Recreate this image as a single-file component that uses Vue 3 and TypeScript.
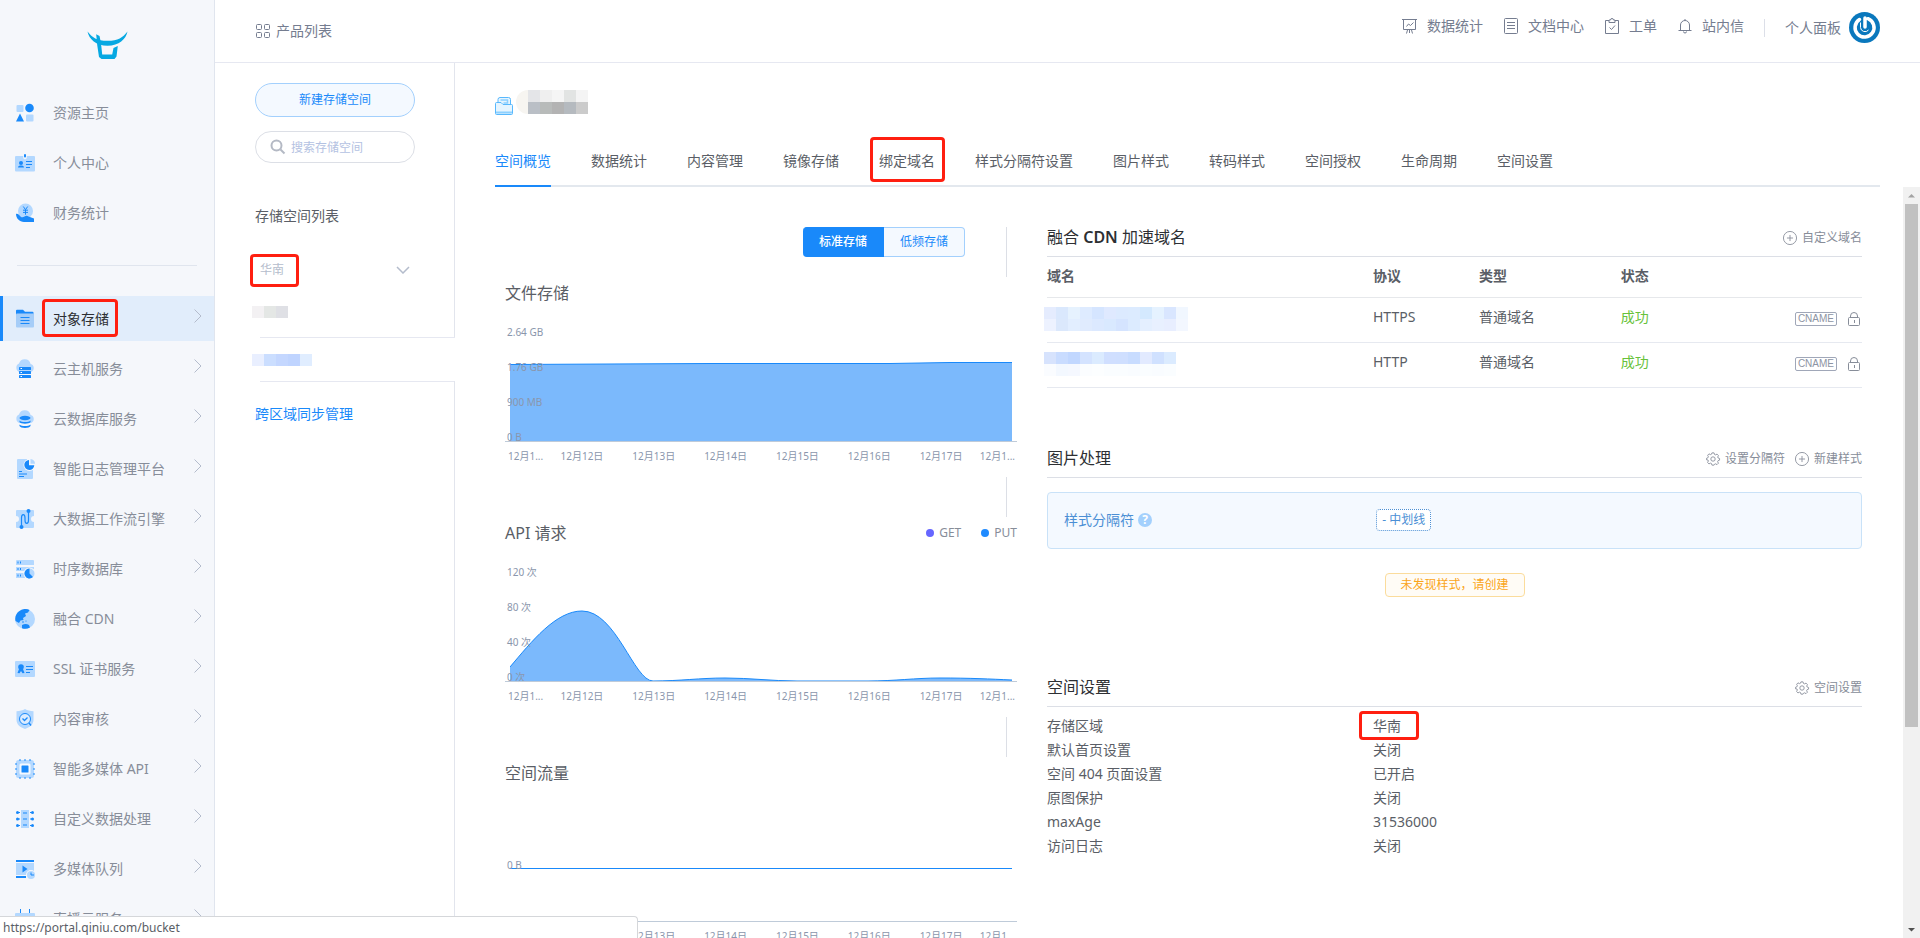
<script setup lang="ts">
import { ref } from 'vue'

interface NavItem {
  label: string
  icon: string
  active?: boolean
}

interface Chart {
  title: string
  legend: { name: string; color: string }[]
  ticks: { label: string; top: number }[]
  area: string
  line: string
}

const L = '#b3d8ff'
const B = '#1989fa'

const topNav: NavItem[] = [
  {
    label: '资源主页',
    icon: `<rect x="1.500" y="2" width="7" height="7" rx="1" fill="${L}"/><circle cx="14.500" cy="5" r="4.300" fill="${B}"/><path d="M5 10.500 9 18.500H1Z" fill="${B}"/><rect x="11" y="11.500" width="7.500" height="7" rx="1" fill="${L}"/>`,
  },
  {
    label: '个人中心',
    icon: `<path d="M1 3h7.200v1.600a1.800 1.800 0 0 0 3.600 0V3H19a1 1 0 0 1 1 1v13.500a1 1 0 0 1-1 1H1a1 1 0 0 1-1-1V4a1 1 0 0 1 1-1Z" fill="${L}"/><rect x="9" y="1" width="2" height="3.500" rx="1" fill="${B}"/><circle cx="6" cy="10" r="2" fill="${B}"/><path d="M3 14.500c0-2.600 6-2.600 6 0ZM11 8h6v1h-6ZM11 11h6v1h-6ZM11 14h4v1h-4Z" fill="${B}"/>`,
  },
  {
    label: '财务统计',
    icon: `<circle cx="10.500" cy="8" r="7.500" fill="${L}"/><path d="m8.300 3.500 2.200 3.200 2.200-3.200M10.500 6.700v5M8 7.200h5M8 9.400h5" stroke="${B}" fill="none"/><path d="M1 11c1.600-.6 3 .5 4 2 1.500 1.800 3 1.500 4.500.6 1.600-1 2.700-.9 4-.2l5.500 2.100V19H9c-4.500 0-8-3.800-8-8Z" fill="${B}"/>`,
  },
]

const productNav: NavItem[] = [
  {
    label: '对象存储',
    active: true,
    icon: `<path d="M1 1.500A1 1 0 0 1 2 .8h6l2 2h7.500a1 1 0 0 1 1 1V6H1Z" fill="${B}"/><rect x="1" y="4.500" width="18" height="14" rx="1" fill="#a5cdf8"/><path d="M5.500 8.500h9M5.500 11.500h9M5.500 14.500h9" stroke="${B}"/>`,
  },
  {
    label: '云主机服务',
    icon: `<path d="M4.500 13A4.500 4.500 0 0 1 4 4.600 6 6 0 0 1 15.600 5 4.200 4.200 0 0 1 16 13Z" fill="${L}"/><rect x="4" y="8" width="12" height="3" rx=".6" fill="${B}"/><rect x="4" y="12" width="12" height="3" rx=".6" fill="${B}"/><rect x="4" y="16" width="12" height="3" rx=".6" fill="${B}"/><path d="M5.500 9.500h1.500M5.500 13.500h1.500M5.500 17.500h1.500" stroke="#fff"/>`,
  },
  {
    label: '云数据库服务',
    icon: `<path d="M4.500 14A4.500 4.500 0 0 1 4 5.600 6 6 0 0 1 15.600 6 4.200 4.200 0 0 1 16 14Z" fill="${L}"/><ellipse cx="10" cy="9" rx="5.500" ry="2.200" fill="${B}"/><path d="M4.500 11.500c2 2 9 2 11 0v1.500c-1 2.300-10 2.300-11 0ZM4.500 15.500c2 2 9 2 11 0V17c-1 2.600-10 2.600-11 0Z" fill="${B}"/>`,
  },
  {
    label: '智能日志管理平台',
    icon: `<path d="M3 0h9v10h6v9a1 1 0 0 1-1 1H3a1 1 0 0 1-1-1V1a1 1 0 0 1 1-1Z" fill="${L}"/><circle cx="14.500" cy="6" r="6" fill="#f5f7fb"/><path d="M14 1v5.300h5.300A5 5 0 1 1 14 1Z" fill="${B}"/><path d="M15.500 0a5 5 0 0 1 4.500 4.700h-4.500Z" fill="${L}"/><path d="M4 12.500h3M4 15h8M4 17.500h5" stroke="${B}"/>`,
  },
  {
    label: '大数据工作流引擎',
    icon: `<path d="M2 1h16a1 1 0 0 1 1 1v5a3 3 0 0 0 0 6v5a1 1 0 0 1-1 1H2a1 1 0 0 1-1-1v-5a3 3 0 0 0 0-6V2a1 1 0 0 1 1-1Z" fill="${L}"/><path d="M6.500 17V9c0-4.500 3.500-4.500 3.500 0v2c0 4.500 3.500 4.500 3.500 0V2" stroke="${B}" stroke-width="1.200" fill="none"/><circle cx="6.500" cy="18" r="2" fill="${B}"/><circle cx="13.500" cy="2" r="2" fill="${B}"/>`,
  },
  {
    label: '时序数据库',
    icon: `<path d="M2 1h16a1 1 0 0 1 1 1v4H1V2a1 1 0 0 1 1-1ZM1 8h18v4H1ZM1 14h9v5H1Z" fill="${L}"/><path d="M3 2.500v2M5.500 2.500v2M3 9v2M5.500 9v2M3 15.500v2M5.500 15.500v2" stroke="${B}"/><circle cx="14.500" cy="14.500" r="6" fill="#f5f7fb"/><circle cx="14.500" cy="14.500" r="5" fill="${L}"/><path d="M14.500 9.500v5l3.500 3.600a5 5 0 1 1-3.500-8.600Z" fill="${B}"/>`,
  },
  {
    label: '融合 CDN',
    icon: `<circle cx="10" cy="10" r="10" fill="${L}"/><path d="M.5 12A10 10 0 0 1 14.500 1l-1.500 2.500-3 1 1 2.500-3 2 .5 2-3 .500L4 14Z" fill="${B}"/><path d="M7 16c3-1.600 5-1 7 0l1 2.500a10 10 0 0 1-8 .8Z" fill="${B}"/><circle cx="8" cy="13" r=".8" fill="${B}"/><circle cx="11" cy="12" r=".6" fill="${B}"/>`,
  },
  {
    label: 'SSL 证书服务',
    icon: `<rect y="2" width="20" height="16" rx="1" fill="${L}"/><circle cx="6" cy="8" r="2.800" fill="${B}"/><path d="m4 10-1.500 4 2 .2L6 12l1.500 2.200 2-.2L8 10ZM11 7h7v1h-7ZM11 10h7v1h-7ZM11 13h4v1h-4Z" fill="${B}"/>`,
  },
  {
    label: '内容审核',
    icon: `<path d="M10 0c2.500 1.500 5 2 8.500 2.200V11c0 4.500-4 7.500-8.500 9-4.500-1.500-8.500-4.500-8.500-9V2.200C5 2 7.500 1.500 10 0Z" fill="${L}"/><circle cx="10" cy="10" r="5.500" fill="#dbecff" stroke="${B}"/><path d="m7.500 9.500 2 2 3-3M14 14l2 2.500" stroke="${B}" stroke-width="1.300" fill="none"/>`,
  },
  {
    label: '智能多媒体 API',
    icon: `<rect x="1" y="1" width="18" height="18" rx="2.500" fill="${L}"/><path d="M5 0v2M10 0v2M15 0v2M5 18v2M10 18v2M15 18v2M0 5h2M0 10h2M0 15h2M18 5h2M18 10h2M18 15h2" stroke="${B}"/><rect x="4.500" y="4.500" width="11" height="11" rx="1.500" fill="#f5f9ff"/><rect x="6.500" y="6.500" width="7" height="7" rx=".6" fill="${B}"/>`,
  },
  {
    label: '自定义数据处理',
    icon: `<rect x="6" y="1" width="8" height="18" fill="${L}"/><path d="M2 3.500h3M2 10h3M2 16.500h3M15 3.500h3M15 10h3M15 16.500h3M8 4h4M8 10h4M8 16h4" stroke="${B}"/><g fill="${B}"><circle cx="2.500" cy="3.500" r="1.500"/><circle cx="2.500" cy="10" r="1.500"/><circle cx="2.500" cy="16.500" r="1.500"/><circle cx="17.500" cy="3.500" r="1.500"/><circle cx="17.500" cy="10" r="1.500"/><circle cx="17.500" cy="16.500" r="1.500"/></g>`,
  },
  {
    label: '多媒体队列',
    icon: `<rect x="1" y="4" width="18" height="12" fill="${L}"/><path d="M1 2h18M1 18h10" stroke="${B}" stroke-width="2"/><path d="m7.500 6.500 5 3.500-5 3.500Z" fill="${B}"/><circle cx="16" cy="16" r="5" fill="#f5f7fb"/><circle cx="16" cy="16" r="4" fill="${L}"/><path d="M16 13.500V16h3" stroke="${B}" fill="none"/>`,
  },
  {
    label: '直播云服务',
    icon: `<rect y="4" width="20" height="14" rx="1" fill="${L}"/><path d="M5.500 0v4M14.500 0v4" stroke="${B}"/>`,
  },
]

const headerLinks: NavItem[] = [
  {
    label: '数据统计',
    icon: '<path d="M0 1.500h15M1.500 1.500v10h12v-10M4.500 8.500l2-2.500 2 1.500 3-3M7.500 12v3M4.500 15.500l1-3.500M10.500 15.500l-1-3.500"/>',
  },
  {
    label: '文档中心',
    icon: '<rect x="1.500" y=".5" width="13" height="15" rx="1"/><path d="M4 4.500h8M4 7.500h8M4 10.500h8"/>',
  },
  {
    label: '工单',
    icon: '<path d="M5 2.500H1.500v13h13v-13H11M5 4.500h6v-2.500H9.500a1.500 1.500 0 0 0-3 0H5ZM5.500 9.500l2 2L11 7.500"/>',
  },
  {
    label: '站内信',
    icon: '<path d="M1.500 12.500h13M3.500 12.500V7a4.500 4.500 0 0 1 9 0v5.500M8 2.500V1M6.500 13.500a1.500 1.500 0 0 0 3 0"/>',
  },
]

const tabs = [
  '空间概览', '数据统计', '内容管理', '镜像存储', '绑定域名', '样式分隔符设置',
  '图片样式', '转码样式', '空间授权', '生命周期', '空间设置',
]

const dates = ['12月1...', '12月12日', '12月13日', '12月14日', '12月15日', '12月16日', '12月17日', '12月1...']

const apiCurve = 'M0 150C22 124 46 94 72 94C106 94 124 164 143 164C170 164 190 161 215 161C240 161 262 164 287 164H358C385 164 405 161 430 161C460 161 480 162 502 163'

const charts: Chart[] = [
  {
    title: '文件存储',
    legend: [],
    ticks: [
      { label: '2.64 GB', top: 45 },
      { label: '1.76 GB', top: 80 },
      { label: '900 MB', top: 115 },
      { label: '0 B', top: 150 },
    ],
    line: 'M0 87.500L200 86.500L380 86.500L440 85.500H502',
    area: 'M0 87.500L200 86.500L380 86.500L440 85.500H502V164H0Z',
  },
  {
    title: 'API 请求',
    legend: [
      { name: 'GET', color: '#6666ff' },
      { name: 'PUT', color: '#1f8bff' },
    ],
    ticks: [
      { label: '120 次', top: 45 },
      { label: '80 次', top: 80 },
      { label: '40 次', top: 115 },
      { label: '0 次', top: 150 },
    ],
    line: apiCurve,
    area: `${apiCurve}V164H0Z`,
  },
  {
    title: '空间流量',
    legend: [],
    ticks: [{ label: '0 B', top: 98 }],
    line: 'M0 111.500H502',
    area: '',
  },
]

const domains = [
  {
    protocol: 'HTTPS',
    mosaic: [
      ['#e5ecfe', '#dae8fd', '#e6f2fe', '#deebff', '#d5e5ff', '#dfe9ff', '#dceaff', '#dcebff', '#d4e9fe', '#e5f2ff', '#d9e6ff', '#f1f7ff'],
      ['#edf2ff', '#dbe8fc', '#e2eeff', '#e0ebfe', '#dce9ff', '#d9e9ff', '#d5e4ff', '#dcebff', '#e4efff', '#e8f0ff', '#e8eeff', '#f3f7ff'],
    ],
  },
  {
    protocol: 'HTTP',
    mosaic: [
      ['#d7e3fd', '#c9dcff', '#c1d7ff', '#d4e3ff', '#dbebff', '#d0dfff', '#cfdfff', '#c8dcff', '#e2eaff', '#d0e1ff', '#dbebff'],
      ['#fafcff', '#f3f8ff', '#f5f8ff', '#fbfdff', '#fcfeff', '#fafdff', '#fafdff', '#f9fcff', '#fafdff', '#f9fcff', '#fafdff'],
    ],
  },
]

const nameMosaic = [
  ['#f7f5f1', '#e4e5e8', '#efefef', '#f5f5f5', '#e2e4e3', '#f4f4f4'],
  ['#f7f5f1', '#babfc6', '#b8bbba', '#b3b3b3', '#b5babf', '#cbcbcb'],
]

const buckets = [
  ['#f3f1f3', '#e4e7e5', '#dfe0e5'],
  ['#e9efff', '#cbdeff', '#c4d7ff', '#bfd4ff', '#e0edff'],
]

const settings = [
  { name: '存储区域', value: '华南', marked: true },
  { name: '默认首页设置', value: '关闭' },
  { name: '空间 404 页面设置', value: '已开启' },
  { name: '原图保护', value: '关闭' },
  { name: 'maxAge', value: '31536000' },
  { name: '访问日志', value: '关闭' },
]

const gear = '<circle cx="8" cy="8" r="2.500"/><path d="M6.800 1h2.400l.5 1.800 1.200.5 1.700-.9 1.600 1.700-.8 1.600.5 1.200 1.600.5v1.900l-1.700.6-.5 1.200.9 1.700-1.600 1.600-1.700-.9-1.200.5L9.200 15H6.800l-.5-1.800-1.200-.5-1.700.9-1.600-1.600.9-1.700-.5-1.200L.6 8.900V7.200l1.600-.6.5-1.200-.8-1.600 1.500-1.700 1.700.9 1.200-.5Z"/>'
const plus = '<circle cx="8" cy="8" r="7.500"/><path d="M4.500 8h7M8 4.500v7"/>'

const keyword = ref('')
</script>

<template>
  <div class="app">
    <aside class="sidebar">
      <a class="logo" href="#" aria-label="首页">
        <svg width="41" height="28" viewBox="0 0 41 28" fill="#06a8e2">
          <path d="M.5.500C5 6.500 10 9.800 20.500 9.800S36 6.500 40.500.500C39 8 32 14.800 20.500 14.800S2 8 .5.500Z" />
          <path d="M9.200 3.200 12.500 5l1.500 7 1.200 11.500h10L26.500 17l4.300-2-1.300 10.500L27.500 28h-13L12 26 10.200 14Z" />
        </svg>
      </a>
      <nav class="nav">
        <a v-for="item in topNav" :key="item.label" class="nav-item" href="#">
          <svg class="nav-icon" viewBox="0 0 20 20" v-html="item.icon" />
          <span class="nav-label">{{ item.label }}</span>
        </a>
      </nav>
      <hr class="nav-rule" />
      <nav class="nav">
        <a v-for="item in productNav" :key="item.label" class="nav-item" :class="{ active: item.active }" href="#">
          <svg class="nav-icon" viewBox="0 0 20 20" v-html="item.icon" />
          <span class="nav-label" :class="{ marked: item.active }">{{ item.label }}</span>
          <svg class="nav-arrow" viewBox="0 0 8 14"><path d="m.5.500 6.500 6.500-6.500 6.500" /></svg>
        </a>
      </nav>
    </aside>

    <div class="shell">
      <header class="header">
        <a class="products" href="#">
          <svg class="line-icon" viewBox="0 0 14 14">
            <rect x=".5" y=".5" width="5" height="5" rx="1" /><rect x="8.500" y=".5" width="5" height="5" rx="1" />
            <rect x=".5" y="8.500" width="5" height="5" rx="1" /><rect x="8.500" y="8.500" width="5" height="5" rx="1" />
          </svg>
          产品列表
        </a>
        <div class="header-right">
          <a v-for="link in headerLinks" :key="link.label" class="header-link" href="#">
            <svg class="line-icon" viewBox="0 0 16 16" v-html="link.icon" />
            {{ link.label }}
          </a>
          <span class="header-sep"></span>
          <a class="user" href="#">
            个人面板
            <svg width="31" height="31" viewBox="0 0 31 31">
              <circle cx="15.500" cy="15.500" r="15.500" fill="#0a78bd" />
              <path d="M10.500 7.500A9.500 9.500 0 1 0 19 6.700M16 6v9" fill="none" stroke="#fff" stroke-width="3.500" stroke-linecap="round" />
              <path d="M11.500 10.500v5a4.500 4.500 0 0 0 8 2.500" fill="none" stroke="#fff" stroke-width="1" />
            </svg>
          </a>
        </div>
      </header>

      <div class="workspace">
        <aside class="buckets">
          <div class="bucket-tools">
            <button class="create" type="button">新建存储空间</button>
            <label class="search">
              <svg viewBox="0 0 16 16"><circle cx="6.500" cy="6.500" r="5" /><path d="m10.500 10.500 4 4" /></svg>
              <input v-model="keyword" type="text" placeholder="搜索存储空间" aria-label="搜索存储空间" />
            </label>
            <h2 class="bucket-title">存储空间列表</h2>
            <button class="region" type="button">
              <span class="marked region-name">华南</span>
              <svg viewBox="0 0 14 8"><path d="m1 1 6 6 6-6" /></svg>
            </button>
          </div>
          <div v-for="(cells, i) in buckets" :key="i" class="bucket" :class="{ current: i === 1 }">
            <div class="mosaic-row">
              <i v-for="(c, j) in cells" :key="j" :style="{ background: c }"></i>
            </div>
          </div>
          <div class="bucket-foot"><a href="#">跨区域同步管理</a></div>
        </aside>

        <main class="main">
          <div class="bucket-name">
            <svg width="18" height="18" viewBox="0 0 18 18" fill="#e6f5ff" stroke="#58b8fd">
              <path d="M3 7V2.500a2 2 0 0 1 2-2h8.500a2 2 0 0 1 2 2V8" />
              <path d="M5.500 3h7v3h-4" fill="none" stroke-width="1.500" stroke="#8dd0ff" />
              <path d="M.5 6.500a1 1 0 0 1 1-1H6l2 2h8.500a1 1 0 0 1 1 1v8a1 1 0 0 1-1 1h-15a1 1 0 0 1-1-1Z" />
              <path d="M1 15.500h16" stroke-width="2" stroke="#8dd0ff" />
            </svg>
            <div class="name-mosaic">
              <div v-for="(row, i) in nameMosaic" :key="i" class="mosaic-row">
                <i v-for="(c, j) in row" :key="j" :style="{ background: c }"></i>
              </div>
            </div>
          </div>
          <nav class="tabs">
            <a v-for="(tab, i) in tabs" :key="tab" href="#" class="tab" :class="{ active: i === 0 }">
              <span :class="{ marked: i === 4 }">{{ tab }}</span>
            </a>
          </nav>

          <div class="body">
            <div class="columns">
              <div class="charts">
                <section v-for="(chart, i) in charts" :key="chart.title">
                  <div class="strip" :class="{ first: i === 0 }">
                    <div v-if="i === 0" class="switch">
                      <button type="button" class="on">标准存储</button>
                      <button type="button">低频存储</button>
                    </div>
                  </div>
                  <div class="chart">
                    <div class="chart-head">
                      <h3>{{ chart.title }}</h3>
                      <ul v-if="chart.legend.length" class="legend">
                        <li v-for="l in chart.legend" :key="l.name">
                          <i :style="{ background: l.color }"></i>{{ l.name }}
                        </li>
                      </ul>
                    </div>
                    <svg class="plot" viewBox="0 0 502 165" preserveAspectRatio="none">
                      <path class="plot-area" :d="chart.area" />
                      <path class="plot-line" :d="chart.line" />
                    </svg>
                    <span v-for="t in chart.ticks" :key="t.label" class="tick" :style="{ top: t.top + 'px' }">{{ t.label }}</span>
                    <div class="dates">
                      <span v-for="(d, j) in dates" :key="j">{{ d }}</span>
                    </div>
                  </div>
                </section>
              </div>

              <div class="panels">
                <section class="panel">
                  <div class="panel-head">
                    <h3>融合 <b>CDN</b> 加速域名</h3>
                    <a href="#"><svg class="line-icon" viewBox="0 0 16 16" v-html="plus" />自定义域名</a>
                  </div>
                  <table class="domains">
                    <thead>
                      <tr><th class="c-name">域名</th><th class="c-proto">协议</th><th class="c-type">类型</th><th class="c-state">状态</th><th></th></tr>
                    </thead>
                    <tbody>
                      <tr v-for="d in domains" :key="d.protocol">
                        <td>
                          <div class="domain-mosaic">
                            <div v-for="(row, i) in d.mosaic" :key="i" class="mosaic-row">
                              <i v-for="(c, j) in row" :key="j" :style="{ background: c }"></i>
                            </div>
                          </div>
                        </td>
                        <td>{{ d.protocol }}</td>
                        <td>普通域名</td>
                        <td class="ok">成功</td>
                        <td>
                          <div class="ops">
                            <button type="button" class="cname">CNAME</button>
                            <button type="button" class="lock" aria-label="HTTPS 设置">
                              <svg class="line-icon" viewBox="0 0 12 14"><rect x=".5" y="5.500" width="11" height="8" rx="1" /><path d="M2.500 5.500V4a3.500 3.500 0 0 1 7 0v1.500M6.500 8v3" /></svg>
                            </button>
                          </div>
                        </td>
                      </tr>
                    </tbody>
                  </table>
                </section>

                <section class="panel images">
                  <div class="panel-head">
                    <h3>图片处理</h3>
                    <a href="#"><svg class="line-icon" viewBox="0 0 16 16" v-html="gear" />设置分隔符</a>
                    <a href="#"><svg class="line-icon" viewBox="0 0 16 16" v-html="plus" />新建样式</a>
                  </div>
                  <div class="separator">
                    <div class="separator-name">样式分隔符<span class="help">?</span></div>
                    <div><span class="dash">- 中划线</span></div>
                  </div>
                  <p class="notice">未发现样式，请创建</p>
                </section>

                <section class="panel">
                  <div class="panel-head">
                    <h3>空间设置</h3>
                    <a href="#"><svg class="line-icon" viewBox="0 0 16 16" v-html="gear" />空间设置</a>
                  </div>
                  <dl class="settings">
                    <template v-for="s in settings" :key="s.name">
                      <dt>{{ s.name }}</dt>
                      <dd><span :class="{ marked: s.marked }">{{ s.value }}</span></dd>
                    </template>
                  </dl>
                </section>
              </div>
            </div>

            <div class="scrollbar">
              <svg viewBox="0 0 17 17"><path d="M5 10.500 8.500 7l3.500 3.500Z" fill="#a3a3a3" /></svg>
              <div class="rail"><div class="thumb"></div></div>
              <svg viewBox="0 0 17 17"><path d="m5 7 3.500 3.500L12 7Z" fill="#505050" /></svg>
            </div>
          </div>
        </main>
      </div>
    </div>

    <div class="status">https://portal.qiniu.com/bucket</div>
  </div>
</template>

<style>
body {
  margin: 0;
  overflow: hidden;
}
</style>

<style scoped>
.app {
  display: flex;
  height: 100vh;
  overflow: hidden;
  background: #fff;
  color: #5a5e66;
  font-family: "Noto Sans", "Noto Sans CJK SC", sans-serif;
  font-size: 14px;
  font-weight: 400;
  line-height: 20px;
}
.app * { box-sizing: border-box; }
.app a { color: inherit; text-decoration: none; }
.app button { font: inherit; cursor: pointer; }
h2, h3, p, ul, dl, dd { margin: 0; padding: 0; font-weight: inherit; }
svg { display: block; flex: none; }
.line-icon { width: 14px; height: 14px; fill: none; stroke: currentColor; overflow: visible; }

.marked { position: relative; }
.marked::after {
  content: "";
  position: absolute;
  inset: -12px -10px;
  border: 3px solid #ff1f10;
  border-radius: 4px;
  pointer-events: none;
}

/* Sidebar */
.sidebar {
  flex: none;
  width: 215px;
  background: #f5f7fb;
  border-right: 1px solid #e0e5ee;
  color: #878d99;
}
.logo { display: flex; justify-content: center; height: 90px; padding-top: 31px; }
.nav { display: flex; flex-direction: column; gap: 5px; }
.nav-item {
  display: flex;
  align-items: center;
  height: 45px;
  padding: 0 12px;
  border-left: 3px solid transparent;
}
.nav-icon { width: 20px; height: 20px; margin-right: 18px; }
.nav-label { margin-right: auto; }
.nav-arrow { width: 8px; height: 14px; margin-bottom: 6px; fill: none; stroke: #b4bccc; }
.app .nav-item.active { background: #e1edfb; border-left-color: #1989fa; color: #2d2f33; }
.nav-item .marked::after { inset: -10px -9px -8px -11px; }
.nav-rule { height: 1px; margin: 30px 17px; border: 0; background: #e0e5ee; }

/* Header */
.shell { flex: 1; min-width: 0; display: flex; flex-direction: column; }
.header {
  flex: none;
  display: flex;
  justify-content: space-between;
  height: 63px;
  padding: 12px 40px 0;
  border-bottom: 1px solid #e6e8f1;
  color: #757d90;
}
.products { display: flex; align-items: center; gap: 6px; height: 38px; padding-left: 1px; }
.header-right { display: flex; height: 30px; }
.header-link { display: flex; align-items: center; gap: 9px; height: 28px; margin-right: 20px; }
.header-link .line-icon { width: 16px; height: 16px; }
.header-sep { width: 1px; height: 18px; margin: 7px 20px 0 0; background: #dcdfe8; }
.user { display: flex; align-items: center; gap: 8px; height: 31px; }

/* Bucket column */
.workspace { flex: 1; min-height: 0; display: flex; }
.buckets { flex: none; width: 240px; display: flex; flex-direction: column; }
.bucket-tools { height: 230px; padding: 20px 39px 0 40px; border-right: 1px solid #e2e5ed; }
.create {
  display: block;
  width: 100%;
  height: 34px;
  padding: 0;
  border: 1px solid #a3d0fd;
  border-radius: 17px;
  background: #f4f9ff;
  color: #1989fa;
}
.app .create, .app .search input { font-size: 12px; }
.search {
  display: flex;
  align-items: center;
  gap: 5px;
  height: 32px;
  margin-top: 14px;
  padding: 0 14px;
  border: 1px solid #dcdfe6;
  border-radius: 16px;
}
.search svg { width: 16px; height: 16px; fill: none; stroke: #b4b9c4; stroke-width: 2; }
.search input { min-width: 0; flex: 1; padding: 0; border: 0; outline: 0; background: none; font-family: inherit; color: #5a5e66; }
.search input::placeholder { color: #b4c2e2; opacity: 1; }
.bucket-title { padding-top: 43px; font-size: 14px; }
.app .region {
  display: flex;
  align-items: center;
  justify-content: space-between;
  width: 100%;
  margin-top: 34px;
  padding: 0 5px;
  border: 0;
  background: none;
  font-size: 12px;
  color: #b4bccc;
}
.region svg { width: 14px; height: 8px; fill: none; stroke: #b4bccc; stroke-width: 1.500; }
.region .marked::after { inset: -6px -15px -7px -10px; }
.bucket { height: 44px; padding: 13px 0 0 37px; border-right: 1px solid #e2e5ed; }
.bucket.current { padding-top: 16px; border-right-color: transparent; }
.bucket + .bucket::before { content: ""; display: block; height: 1px; margin: -16px -1px 16px 8px; background: #e6e8f1; }
.mosaic-row { display: flex; height: 12px; }
.mosaic-row i { width: 12px; height: 12px; }
.bucket-foot {
  flex: 1;
  padding: 23px 0 0 40px;
  border-right: 1px solid #e2e5ed;
  background: linear-gradient(#e6e8f1, #e6e8f1) 45px 0 / 100% 1px no-repeat;
  color: #1989fa;
}

/* Main */
.main { flex: 1; min-width: 0; display: flex; flex-direction: column; }
.bucket-name { display: flex; align-items: flex-end; gap: 3px; height: 52px; padding-left: 40px; }
.name-mosaic { overflow: hidden; margin-bottom: 1px; border-radius: 12px 0 0 12px; }
.tabs { display: flex; gap: 40px; margin: 22px 40px 0; height: 50px; border-bottom: 2px solid #e3e8ee; }
.tab { display: block; height: 50px; padding-top: 14px; white-space: nowrap; }
.tab.active { border-bottom: 2px solid #1989fa; }
.app .tab.active { color: #1989fa; }
.tab .marked { display: block; }
.tab .marked::after { inset: -14px -10px -11px -9px; }
.body { flex: 1; min-height: 0; display: flex; overflow: hidden; }
.columns {
  flex: 1;
  min-width: 0;
  display: grid;
  grid-template-columns: minmax(0, 512fr) minmax(0, 815fr);
  gap: 30px;
  padding: 40px 41px 0 50px;
}

/* Charts */
.strip { height: 40px; margin-right: 10px; border-right: 1px solid #dcdfe6; }
.strip.first { height: 50px; }
.switch { display: flex; justify-content: flex-end; padding-right: 41px; }
.app .switch button {
  height: 30px;
  padding: 0 16px;
  border: 1px solid #a3d0fd;
  border-left: 0;
  border-radius: 0 4px 4px 0;
  background: #f4f9ff;
  color: #1989fa;
  font-size: 12px;
  line-height: 18px;
}
.app .switch .on { border-color: #1989fa; border-radius: 4px 0 0 4px; background: #1989fa; color: #fff; font-weight: 500; }
.chart { position: relative; height: 200px; }
.chart-head { display: flex; justify-content: space-between; height: 32px; align-items: center; }
.chart-head h3, .panel-head h3 { font-size: 16px; }
.legend { display: flex; gap: 20px; list-style: none; font-size: 12px; color: #878d99; }
.legend li { display: flex; align-items: center; gap: 5px; }
.legend i { width: 8px; height: 8px; border-radius: 50%; }
.plot { position: absolute; top: 0; left: 5px; width: calc(100% - 10px); height: 165px; pointer-events: none; }
.plot-area { fill: #7bb9fc; }
.plot-line { fill: none; stroke: #1989fa; vector-effect: non-scaling-stroke; }
.tick { position: absolute; left: 2px; font-size: 10px; color: #8a96ac; }
.dates {
  position: absolute;
  inset: 164px 0 auto;
  display: grid;
  grid-template-columns: 38px repeat(6, 1fr) 38px;
  padding: 4px 2px 0 3px;
  border-top: 1px solid #bfcbd9;
  font-size: 10px;
  color: #8a96ac;
  text-align: center;
}
.dates span:first-child { text-align: left; }
.dates span:last-child { text-align: right; }

/* Panels */
.panel { margin-bottom: 60px; }
.panel-head {
  display: flex;
  gap: 10px;
  height: 30px;
  border-bottom: 1px solid #dcdfe6;
  color: #878d99;
  font-size: 12px;
}
.panel-head h3 { margin-right: auto; color: #2d2f33; }
.panel-head b { font-weight: 600; }
.panel-head a { display: flex; align-items: center; gap: 5px; height: 22px; }
.domains { width: 100%; table-layout: fixed; border-collapse: separate; border-spacing: 0; }
.domains th { padding: 9px 0 11px; border-bottom: 1px solid #e6e8eb; font-weight: 700; text-align: left; }
.domains td { padding: 9px 0 15px; border-bottom: 1px solid #e6e9f0; vertical-align: top; }
.c-name { width: 40%; }
.c-proto { width: 13%; }
.c-type { width: 17.4%; }
.c-state { width: 13%; }
.domain-mosaic { height: 20px; margin-left: -3px; }
.domains .ok { color: #67c23a; }
.ops { display: flex; align-items: center; justify-content: flex-end; gap: 11px; padding: 4px 2px 0 0; height: 20px; color: #878d99; }
.app .cname {
  height: 14px;
  padding: 0 2px;
  border: 1px solid #a0a7b8;
  border-radius: 2px;
  background: none;
  color: #8d94a3;
  font-family: "Liberation Sans", Arial, sans-serif;
  font-size: 10px;
  line-height: 12px;
}
.lock { padding: 0; border: 0; background: none; color: #878d99; }
.lock .line-icon { width: 12px; }
.images { padding-bottom: 20px; }
.separator {
  display: grid;
  grid-template-columns: 40% 60%;
  align-items: center;
  height: 57px;
  margin-top: 14px;
  padding-bottom: 2px;
  border: 1px solid #c9e2f8;
  border-radius: 4px;
  background: #f4f9ff;
  color: #4b8fd5;
}
.separator-name { display: flex; align-items: center; gap: 4px; padding-left: 16px; }
.help { width: 14px; height: 14px; border-radius: 50%; background: #a3d0fd; color: #fff; font-size: 12px; font-weight: 700; line-height: 14px; text-align: center; }
.dash { display: inline-block; margin-left: 3px; padding: 0 5px; border: 1px dotted #4b8fd5; border-radius: 4px; background: #fff; font-size: 12px; }
.notice {
  width: 140px;
  height: 24px;
  margin: 24px auto 0;
  border: 1px solid #fbdc9c;
  border-radius: 4px;
  background: #fffcf6;
  color: #faa51a;
  font-size: 12px;
  line-height: 22px;
  text-align: center;
}
.app .notice { margin: 24px auto 0; }
.settings { display: grid; grid-template-columns: 40% 60%; padding-top: 7px; line-height: 24px; }
.settings .marked { display: inline-block; }
.settings .marked::after { inset: -3px -18px -2px -14px; }

/* Scroll bar */
.scrollbar { flex: none; width: 17px; display: flex; flex-direction: column; background: #f1f1f1; }
.scrollbar svg { width: 17px; height: 17px; }
.rail { flex: 1; padding: 0 2px; }
.thumb { height: 73%; background: #c1c1c1; }

/* Link target bubble */
.status {
  position: fixed;
  bottom: 0;
  left: 0;
  width: calc(100% / 3 - 2px);
  height: 22px;
  padding-left: 3px;
  border: solid #d5d7da;
  border-width: 1px 1px 0 0;
  border-radius: 0 4px 0 0;
  background: #fff;
  font-size: 12px;
  line-height: 22px;
}
</style>
